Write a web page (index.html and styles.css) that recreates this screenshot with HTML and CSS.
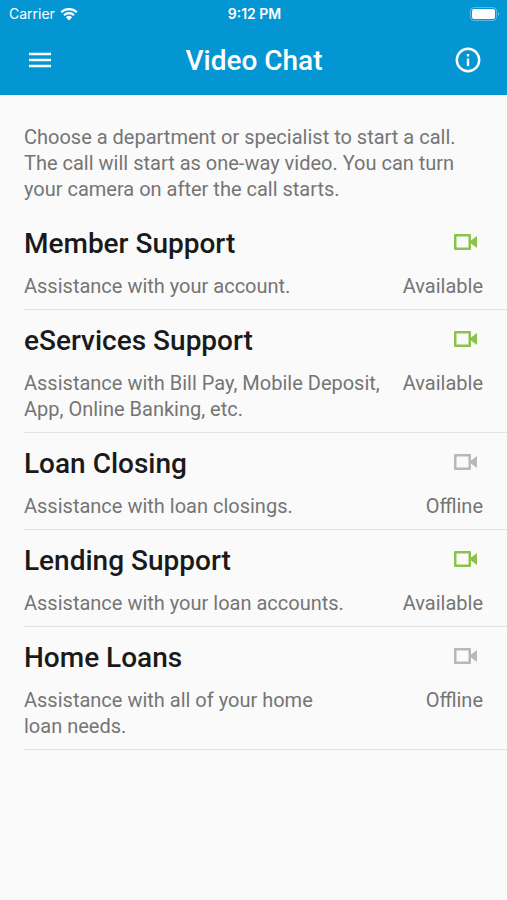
FILE: index.html
```html
<!DOCTYPE html>
<html lang="en">
<head>
<meta charset="utf-8">
<meta name="viewport" content="width=device-width, initial-scale=1">
<title>Video Chat</title>
<link rel="stylesheet" href="styles.css">
</head>
<body>
<svg class="symbols" aria-hidden="true">
  <symbol id="camera" viewBox="0 0 24 16">
    <path fill-rule="evenodd" d="M1 0h15a1 1 0 0 1 1 1v5.500L23 2v12l-6-4.500V15a1 1 0 0 1-1 1H1a1 1 0 0 1-1-1V1a1 1 0 0 1 1-1zM2.500 2.500v11h12v-11z"/>
  </symbol>
</svg>
<header class="header">
  <div class="status">
    <div class="carrier">
      <span>Carrier</span>
      <svg class="wifi" viewBox="0 0 18 14" aria-hidden="true">
        <path d="M1.200 5.200a11.200 11.200 0 0 1 15.600 0M4 8.200a7.200 7.200 0 0 1 10 0" fill="none" stroke="currentColor" stroke-width="2.200"/>
        <path d="M5.900 10.300a4.500 4.500 0 0 1 6.200 0L9 13.600z" fill="currentColor"/>
      </svg>
    </div>
    <span class="time">9:12 PM</span>
    <svg class="battery" viewBox="0 0 30 14" aria-hidden="true">
      <rect x=".5" y=".5" width="26" height="13" rx="3.500" fill="none" stroke="currentColor" opacity=".35"/>
      <rect x="2" y="2" width="23" height="10" rx="2" fill="currentColor"/>
      <path d="M28 5q2 2 0 4z" fill="currentColor" opacity=".5"/>
    </svg>
  </div>
  <div class="bar">
    <button class="icon-button" type="button" aria-label="Menu">
      <svg class="menu-icon" viewBox="0 0 24 16" aria-hidden="true"><path d="M1 2h22M1 8h22M1 14h22" stroke="currentColor" stroke-width="2.600"/></svg>
    </button>
    <h1 class="title">Video Chat</h1>
    <button class="icon-button" type="button" aria-label="Information">
      <svg class="info-icon" viewBox="0 0 26 26" aria-hidden="true"><circle cx="13" cy="13" r="11.200" fill="none" stroke="currentColor" stroke-width="2.400"/><path d="M13 11.500v7.500M13 7v2.500" stroke="currentColor" stroke-width="2.400"/></svg>
    </button>
  </div>
</header>
<main class="content">
  <p class="intro">Choose a department or specialist to start a call. The call will start as one-way video. You can turn your camera on after the call starts.</p>
  <ul class="departments">
    <li class="department">
      <h2 class="name">Member Support</h2>
      <svg class="camera available" aria-hidden="true"><use href="#camera"/></svg>
      <p class="description">Assistance with your account.</p>
      <span class="state">Available</span>
    </li>
    <li class="department">
      <h2 class="name">eServices Support</h2>
      <svg class="camera available" aria-hidden="true"><use href="#camera"/></svg>
      <p class="description">Assistance with Bill Pay, Mobile Deposit, App, Online Banking, etc.</p>
      <span class="state">Available</span>
    </li>
    <li class="department">
      <h2 class="name">Loan Closing</h2>
      <svg class="camera" aria-hidden="true"><use href="#camera"/></svg>
      <p class="description">Assistance with loan closings.</p>
      <span class="state">Offline</span>
    </li>
    <li class="department">
      <h2 class="name">Lending Support</h2>
      <svg class="camera available" aria-hidden="true"><use href="#camera"/></svg>
      <p class="description">Assistance with your loan accounts.</p>
      <span class="state">Available</span>
    </li>
    <li class="department">
      <h2 class="name">Home Loans</h2>
      <svg class="camera" aria-hidden="true"><use href="#camera"/></svg>
      <p class="description">Assistance with all of your home<br>loan needs.</p>
      <span class="state">Offline</span>
    </li>
  </ul>
</main>
</body>
</html>
```
FILE: styles.css
```css
* { box-sizing: border-box; }

body {
  margin: 0;
  background: #fafafa;
  color: #757575;
  font: 20px/26px Roboto, sans-serif;
}

h1, h2, p, ul { margin: 0; padding: 0; }

.symbols { display: none; }

.header {
  background: #0396d3;
  color: #fff;
  padding-bottom: 4px;
}

.status {
  display: grid;
  grid-template-columns: 1fr auto 1fr;
  align-items: center;
  height: 27px;
  padding: 0 7px 0 9px;
  font: 14px/27px Inter, sans-serif;
}

.carrier {
  display: flex;
  align-items: center;
  gap: 5px;
}

.wifi { width: 18px; height: 14px; }
.time { font-weight: 600; }

.battery {
  justify-self: end;
  width: 30px;
  height: 14px;
}

.bar {
  display: grid;
  grid-template-columns: 48px 1fr 48px;
  align-items: start;
  height: 64px;
  padding: 9px 15px 0 16px;
}

.icon-button {
  display: grid;
  place-items: center;
  width: 48px;
  height: 48px;
  padding: 0;
  border: 0;
  background: none;
  color: inherit;
}

.menu-icon { width: 24px; height: 16px; }
.info-icon { width: 26px; height: 26px; }

.title {
  padding-top: 9px;
  font-size: 28px;
  line-height: 32px;
  font-weight: 500;
  text-align: center;
}

.content { padding: 29px 0 0 24px; }
.intro { padding-right: 24px; }

.departments {
  list-style: none;
  padding-top: 11px;
}

.department {
  display: grid;
  grid-template-columns: 1fr auto;
  gap: 13px 16px;
  padding: 15px 24px 10px 0;
  border-bottom: 1px solid #e4e4e4;
}

.name {
  color: #1a1a1a;
  font-size: 28px;
  line-height: 32px;
  font-weight: 500;
}

.camera {
  align-self: start;
  justify-self: end;
  width: 24px;
  height: 16px;
  margin: 6px 5px 0 0;
  fill: #b8b8b8;
}

.available { fill: #8bc34a; }
.state { text-align: right; }
```
